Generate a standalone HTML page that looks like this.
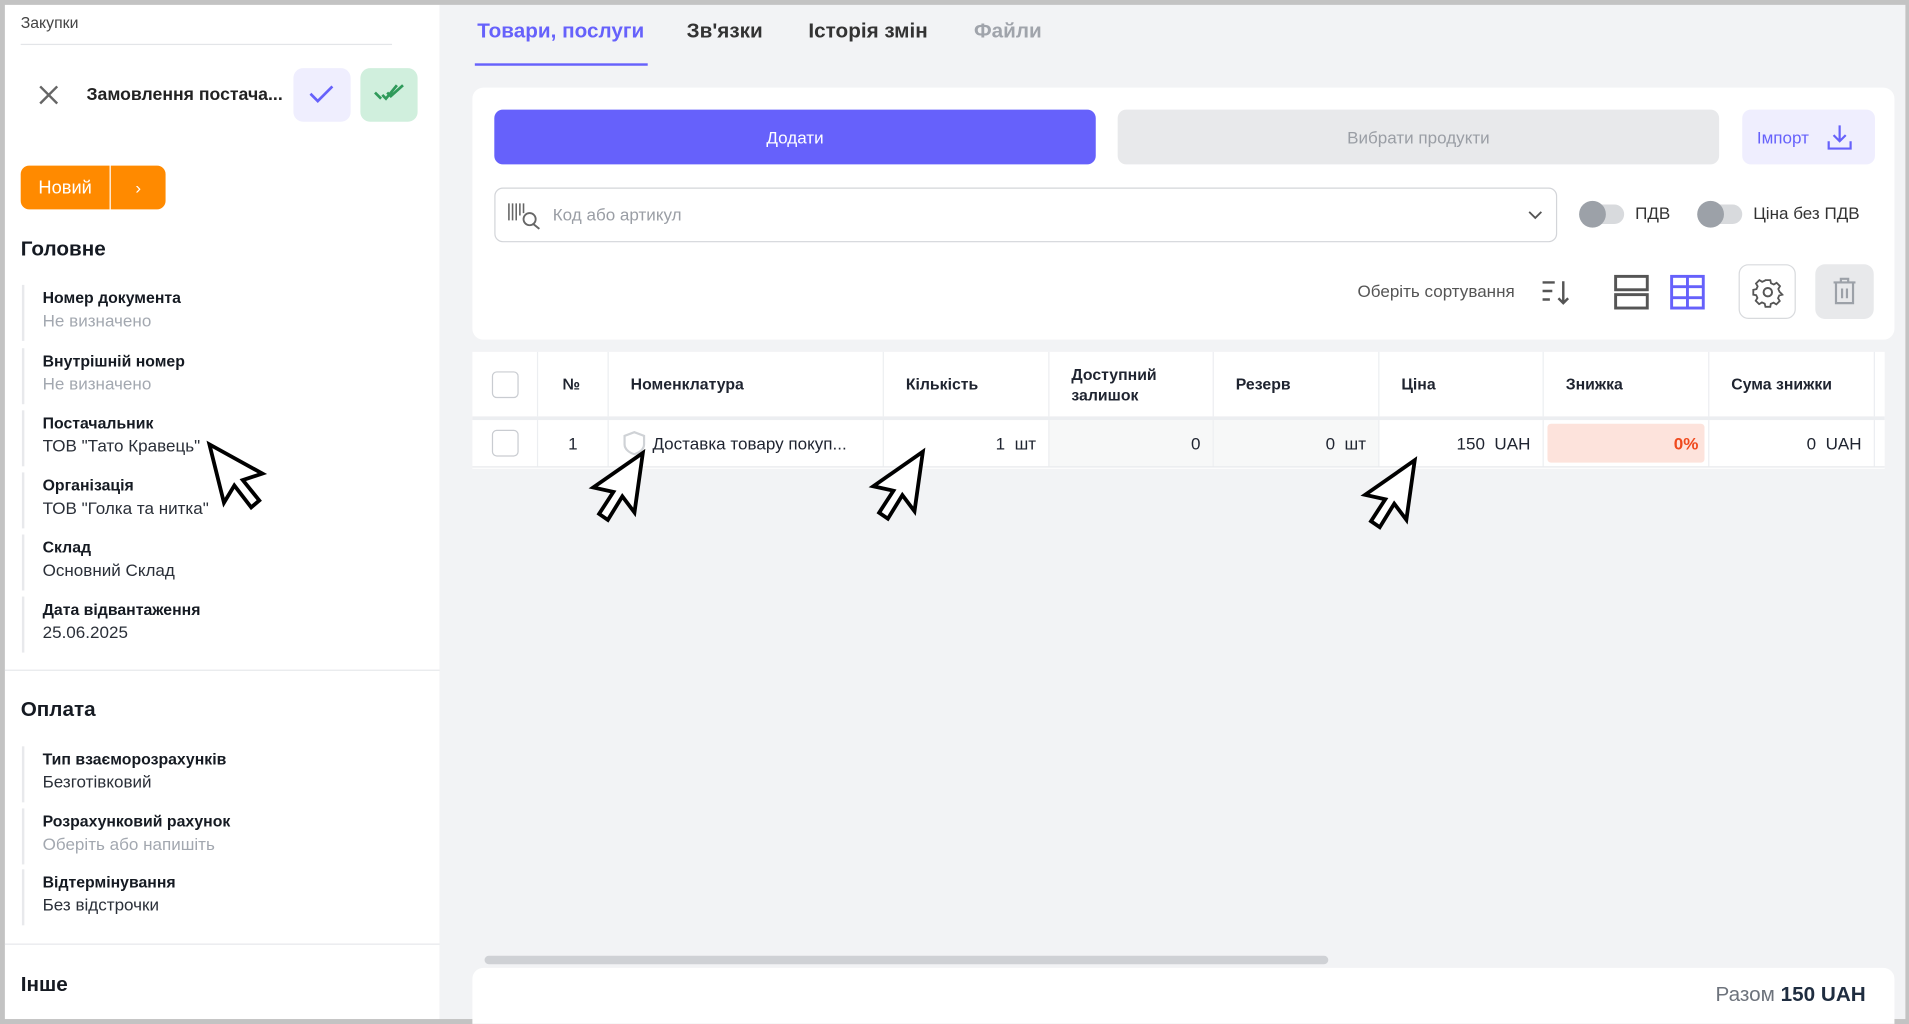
<!DOCTYPE html>
<html><head><meta charset="utf-8"><style>
*{box-sizing:border-box;margin:0;padding:0}
html,body{width:1909px;height:1024px;overflow:hidden;background:#c3c3c3}
#w{position:absolute;left:0;top:0;width:1568px;height:841px;transform:scale(1.2175);transform-origin:0 0;font-family:"Liberation Sans",sans-serif;color:#1f2430}
.a{position:absolute}
.left{left:4px;top:4px;width:357px;height:833px;background:#fff;overflow:hidden}
.main{left:361px;top:4px;width:1204px;height:833px;background:#f2f3f5}
.lbl{font-weight:bold;font-size:13px;color:#151a22}
.val{font-size:14px;color:#2a2f38;margin-top:3px}
.gv{color:#a3a8b0}
.fld{position:absolute;left:14px;border-left:2px solid #e8e9ec;padding-left:15px;height:44px;padding-top:3px}
.h{position:absolute;left:13px;font-weight:bold;font-size:17px;color:#151a22}
.btn{position:absolute;border-radius:7px;display:flex;align-items:center;justify-content:center;font-size:14px}
.th{position:absolute;top:0;height:53px;display:flex;align-items:center;font-weight:bold;font-size:13px;padding-left:18px;border-right:1px solid #eceef1}
.td{position:absolute;top:0;height:38px;display:flex;align-items:center;justify-content:flex-end;font-size:14px;padding-right:10px;border-right:1px solid #eceef1}
.cb{width:22px;height:22px;border:1.5px solid #c9ccd1;border-radius:4px}
</style></head><body><div id="w">
<div class="a left">
 <div class="a" style="left:13px;top:7px;font-size:13px;color:#444">Закупки</div>
 <div class="a" style="left:13px;top:32px;width:305px;height:1px;background:#e3e5e8"></div>
 <svg class="a" style="left:27px;top:65px" width="18" height="18" viewBox="0 0 18 18"><path d="M2 2L16 16M16 2L2 16" stroke="#666" stroke-width="2"/></svg>
 <div class="a" style="left:67px;top:66px;font-weight:bold;font-size:14.5px;color:#222">Замовлення постача...</div>
 <div class="a" style="left:237px;top:52px;width:47px;height:44px;border-radius:8px;background:#efeefe"></div>
 <svg class="a" style="left:249px;top:64px" width="22" height="18"><path d="M2 9L8 15L20 3" stroke="#6661fb" stroke-width="2.2" fill="none"/></svg>
 <div class="a" style="left:292px;top:52px;width:47px;height:44px;border-radius:8px;background:#d0efdd"></div>
 <svg class="a" style="left:302px;top:63px" width="28" height="18"><path d="M2 9L7 14M8 11L11 14L20 3M12 9L15 12L25 3" stroke="#2f9a5a" stroke-width="2.2" fill="none"/></svg>
 <div class="btn" style="left:13px;top:132px;width:73px;height:36px;background:#ff8a00;color:#fff;border-radius:7px 0 0 7px;font-size:15px">Новий</div>
 <div class="btn" style="left:87px;top:132px;width:45px;height:36px;background:#ff8a00;color:#fff;border-radius:0 7px 7px 0">›</div>
 <div class="h" style="top:191px">Головне</div>
 <div class="fld" style="top:230px;height:46px"><div class="lbl">Номер документа</div><div class="val gv">Не визначено</div></div>
 <div class="fld" style="top:282px;height:46px"><div class="lbl">Внутрішній номер</div><div class="val gv">Не визначено</div></div>
 <div class="fld" style="top:333px;height:46px"><div class="lbl">Постачальник</div><div class="val">ТОВ "Тато Кравець"</div></div>
 <div class="fld" style="top:384px;height:46px"><div class="lbl">Організація</div><div class="val">ТОВ "Голка та нитка"</div></div>
 <div class="fld" style="top:435px;height:46px"><div class="lbl">Склад</div><div class="val">Основний Склад</div></div>
 <div class="fld" style="top:486px;height:46px"><div class="lbl">Дата відвантаження</div><div class="val">25.06.2025</div></div>
 <div class="a" style="left:0;top:546px;width:357px;height:1px;background:#e6e8eb"></div>
 <div class="h" style="top:569px">Оплата</div>
 <div class="fld" style="top:609px;height:46px"><div class="lbl">Тип взаєморозрахунків</div><div class="val">Безготівковий</div></div>
 <div class="fld" style="top:660px;height:46px"><div class="lbl">Розрахунковий рахунок</div><div class="val gv">Оберіть або напишіть</div></div>
 <div class="fld" style="top:710px;height:46px"><div class="lbl">Відтермінування</div><div class="val">Без відстрочки</div></div>
 <div class="a" style="left:0;top:771px;width:357px;height:1px;background:#e6e8eb"></div>
 <div class="h" style="top:795px">Інше</div>
</div>
<div class="a" style="left:362px;top:120px;width:8px;height:596px;background:#cfd1d5;border-radius:4px"></div>
<div class="a main">
 <div class="a" style="left:31px;top:12px;font-size:17px;font-weight:bold;color:#6661fb">Товари, послуги</div>
 <div class="a" style="left:29px;top:48px;width:142px;height:2px;background:#6661fb"></div>
 <div class="a" style="left:203px;top:12px;font-size:17px;font-weight:bold;color:#333">Зв'язки</div>
 <div class="a" style="left:303px;top:12px;font-size:17px;font-weight:bold;color:#333">Історія змін</div>
 <div class="a" style="left:439px;top:12px;font-size:17px;font-weight:bold;color:#a0a4ab">Файли</div>
 <div class="a" style="left:27px;top:68px;width:1168px;height:207px;background:#fff;border-radius:9px">
  <div class="btn" style="left:18px;top:18px;width:494px;height:45px;background:#6661fb;color:#fff">Додати</div>
  <div class="btn" style="left:530px;top:18px;width:494px;height:45px;background:#e8e9eb;color:#9a9ea5">Вибрати продукти</div>
  <div class="btn" style="left:1043px;top:18px;width:109px;height:45px;background:#efeefe;color:#6661fb;justify-content:flex-start;padding-left:12px">Імпорт
   <svg style="margin-left:14px" width="22" height="24"><path d="M11 2V15M6 10L11 15L16 10M2 15V21H20V15" stroke="#6661fb" stroke-width="1.8" fill="none"/></svg></div>
  <div class="a" style="left:18px;top:82px;width:873px;height:45px;border:1px solid #d3d5d9;border-radius:7px">
   <svg class="a" style="left:9px;top:10px" width="30" height="24"><path d="M2 2V16M5 2V16M8 2V16M11 2V12M14 2V10" stroke="#666" stroke-width="1.3"/><circle cx="19" cy="15" r="5" stroke="#666" stroke-width="1.5" fill="none"/><path d="M22 19L27 23" stroke="#666" stroke-width="1.6"/></svg>
   <div class="a" style="left:47px;top:13px;font-size:14px;color:#9a9ea5">Код або артикул</div>
   <svg class="a" style="left:848px;top:18px" width="12" height="8"><path d="M1 1L6 6L11 1" stroke="#555" stroke-width="1.5" fill="none"/></svg>
  </div>
  <div class="a" style="left:910px;top:96px;width:36px;height:16px;background:#d8dadd;border-radius:8px"></div>
  <div class="a" style="left:909px;top:93px;width:22px;height:22px;background:#9ca1a8;border-radius:50%"></div>
  <div class="a" style="left:955px;top:95px;font-size:14px;color:#333">ПДВ</div>
  <div class="a" style="left:1007px;top:96px;width:36px;height:16px;background:#d8dadd;border-radius:8px"></div>
  <div class="a" style="left:1006px;top:93px;width:22px;height:22px;background:#9ca1a8;border-radius:50%"></div>
  <div class="a" style="left:1052px;top:95px;font-size:14px;color:#333">Ціна без ПДВ</div>
  <div class="a" style="left:727px;top:159px;font-size:14px;color:#555">Оберіть сортування</div>
  <svg class="a" style="left:877px;top:156px" width="26" height="24"><path d="M2 4H12M2 11H10M2 18H8M19 3V21M15 17L19 21L23 17" stroke="#555" stroke-width="2" fill="none"/></svg>
  <svg class="a" style="left:937px;top:153px" width="30" height="30"><rect x="2" y="2" width="26" height="11" stroke="#555" stroke-width="2.4" fill="none"/><rect x="2" y="17" width="26" height="11" stroke="#555" stroke-width="2.4" fill="none"/></svg>
  <svg class="a" style="left:983px;top:153px" width="30" height="30"><rect x="2" y="2" width="26" height="26" stroke="#6661fb" stroke-width="2.4" fill="none"/><path d="M2 10.5H28M2 19.5H28M15 2V28" stroke="#6661fb" stroke-width="2.4"/></svg>
  <div class="a" style="left:1040px;top:145px;width:47px;height:45px;border:1px solid #d8dadd;border-radius:8px"></div>
  <svg class="a" style="left:1051px;top:155px" width="26" height="26" viewBox="0 0 24 24"><circle cx="12" cy="12" r="3.2" stroke="#555" stroke-width="1.5" fill="none"/><path d="M10 2h4l.6 2.6 2.3 1 2.3-1.4 2.8 2.8-1.4 2.3 1 2.3L24 14v0 0l-2.6.6-1 2.3 1.4 2.3-2.8 2.8-2.3-1.4-2.3 1L14 24h-4l-.6-2.6-2.3-1-2.3 1.4-2.8-2.8 1.4-2.3-1-2.3L0 14v-4l2.6-.6 1-2.3L2.2 4.8 5 2l2.3 1.4 2.3-1z" transform="translate(1 1) scale(.92)" stroke="#555" stroke-width="1.5" fill="none"/></svg>
  <div class="a" style="left:1103px;top:145px;width:48px;height:45px;background:#e8e9eb;border-radius:8px"></div>
  <svg class="a" style="left:1117px;top:155px" width="20" height="24"><path d="M1 5H19M7 5V2H13V5M3 5V22H17V5M8 10V18M12 10V18" stroke="#9ca1a8" stroke-width="1.8" fill="none"/></svg>
 </div>
 <div class="a" style="left:27px;top:285px;width:1160px;height:96px;background:#fff">
  <div class="th" style="left:0;width:54px;justify-content:center;padding:0"><div class="cb"></div></div>
  <div class="th" style="left:54px;width:58px;padding-left:20px">№</div>
  <div class="th" style="left:112px;width:226px">Номенклатура</div>
  <div class="th" style="left:338px;width:136px">Кількість</div>
  <div class="th" style="left:474px;width:135px;line-height:17px">Доступний<br>залишок</div>
  <div class="th" style="left:609px;width:136px">Резерв</div>
  <div class="th" style="left:745px;width:135px">Ціна</div>
  <div class="th" style="left:880px;width:136px">Знижка</div>
  <div class="th" style="left:1016px;width:136px">Сума знижки</div>
  <div class="a" style="left:0;top:53px;width:1160px;height:3px;background:#eceef1"></div>
  <div class="a" style="left:0;top:56px;width:1160px;height:38px">
   <div class="td" style="left:0;width:54px;justify-content:center;padding:0"><div class="cb"></div></div>
   <div class="td" style="left:54px;width:58px;justify-content:center;padding:0">1</div>
   <div class="td" style="left:112px;width:226px;justify-content:flex-start;padding-left:10px"><svg width="22" height="22"><path d="M11 2L19 5V12C19 16 15 19 11 20C7 19 3 16 3 12V5Z" stroke="#cfd2d6" stroke-width="1.8" fill="none"/></svg>&nbsp;Доставка товару покуп...</div>
   <div class="td" style="left:338px;width:136px">1&nbsp;&nbsp;шт</div>
   <div class="td" style="left:474px;width:135px;background:#f7f8f8">0</div>
   <div class="td" style="left:609px;width:136px;background:#f7f8f8">0&nbsp;&nbsp;шт</div>
   <div class="td" style="left:745px;width:135px">150&nbsp;&nbsp;UAH</div>
   <div class="td" style="left:880px;width:136px;padding:3px"><div style="width:100%;height:100%;background:#fde3dc;border-radius:3px;color:#ef4a1e;font-weight:bold;display:flex;align-items:center;justify-content:flex-end;padding-right:5px">0%</div></div>
   <div class="td" style="left:1016px;width:136px">0&nbsp;&nbsp;UAH</div>
   <div class="a" style="left:0;top:38px;width:1160px;height:1px;background:#e6e8eb"></div>
  </div>
 </div>
 <div class="a" style="left:37px;top:781px;width:693px;height:7px;background:#cfd1d5;border-radius:4px"></div>
 <div class="a" style="left:27px;top:791px;width:1168px;height:46px;background:#fff;border-radius:9px 9px 0 0"></div>
 <div class="a" style="left:1048px;top:803px;font-size:17px;color:#6d737c">Разом <b style="color:#1f2d40">150 UAH</b></div>
</div>
<svg class="a" style="left:0;top:0" width="1568" height="841">
 <defs><path id="cur" d="M0 0L0 38L9 29L16 45L22 42L15 27L28 26Z" stroke="#000" stroke-width="2.4" fill="#fff" stroke-linejoin="miter"/></defs>
 <use href="#cur" transform="translate(172 365) rotate(-14) scale(1.3)"/>
 <use href="#cur" transform="translate(528 372) rotate(8) scale(-1.3 1.3)"/>
 <use href="#cur" transform="translate(758 371) rotate(8) scale(-1.3 1.3)"/>
 <use href="#cur" transform="translate(1162 378) rotate(8) scale(-1.3 1.3)"/>
</svg>
</div></body></html>
